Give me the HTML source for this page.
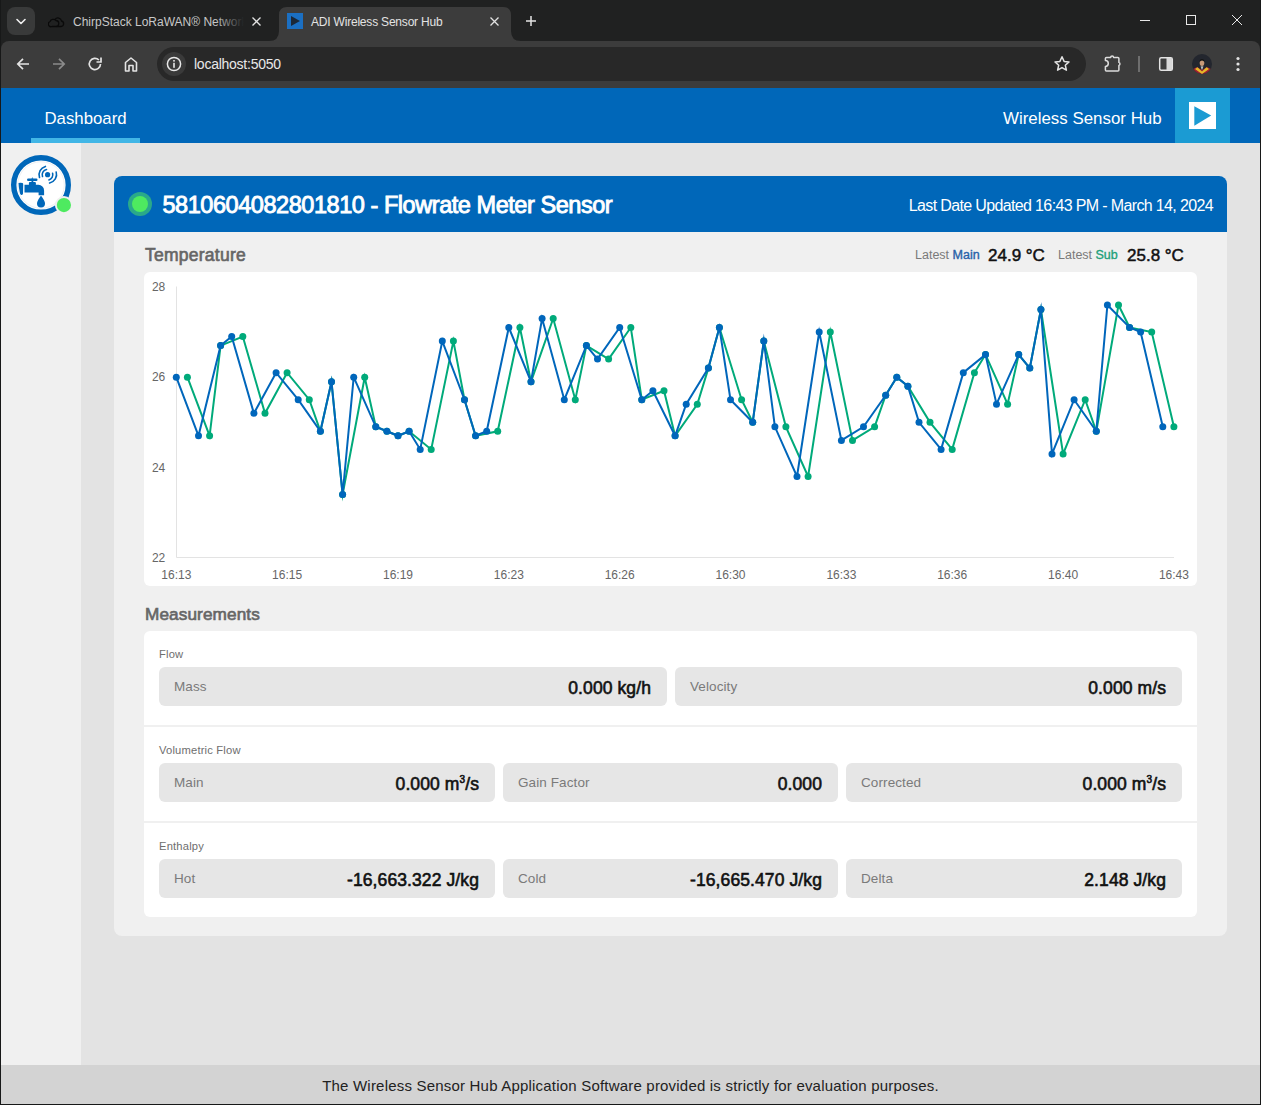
<!DOCTYPE html>
<html><head><meta charset="utf-8"><title>ADI Wireless Sensor Hub</title>
<style>
*{box-sizing:border-box;margin:0;padding:0}
html,body{width:1261px;height:1105px;overflow:hidden}
body{position:relative;background:#202121;font-family:"Liberation Sans",sans-serif}
.a{position:absolute}
.tabtxt{position:absolute;font-size:12px;color:#e3e3e3;white-space:nowrap;line-height:14px}
.hdr{background:#0067b9}
.lbl{color:#666;-webkit-text-stroke:0.65px #666}
.sec{position:absolute;left:144px;width:1053px;background:#fff}
.grp{position:absolute;left:15px;font-size:11.2px;color:#6e6e6e;line-height:13px;letter-spacing:0.18px}
.box{position:absolute;height:39px;background:#e6e6e6;border-radius:6px}
.box .k{position:absolute;left:15px;top:13px;font-size:13.5px;color:#7a7a7a;line-height:14px;letter-spacing:0.1px}
.box .v{position:absolute;right:16px;top:12.5px;font-size:17.5px;color:#111;-webkit-text-stroke:0.6px #111;line-height:17.5px;letter-spacing:0.1px;white-space:nowrap}
.box .v sup{font-size:10px;position:relative;top:-1px;vertical-align:top;line-height:10px}
</style></head><body>
<!-- window borders -->
<div class="a" style="left:0;top:0;width:1px;height:1105px;background:#171818"></div>
<div class="a" style="left:1260px;top:0;width:1px;height:1105px;background:#171818"></div>
<div class="a" style="left:0;top:1104px;width:1261px;height:1px;background:#171818"></div>
<!-- tab strip -->
<div class="a" style="left:7px;top:7px;width:28px;height:28px;border-radius:8px;background:#393a3a"></div>
<svg class="a" style="left:7px;top:7px" width="28" height="28"><path d="M10 12.5 L14 16.5 L18 12.5" fill="none" stroke="#f0f0f0" stroke-width="1.6" stroke-linecap="round" stroke-linejoin="round"/></svg>
<svg class="a" style="left:48px;top:15px" width="18" height="13"><path d="M4 11.5 H7.5 A3 3 0 0 0 8 5.5 A3.6 3.6 0 0 0 2 6.5 A2.6 2.6 0 0 0 4 11.5 Z" fill="none" stroke="#0a0a0a" stroke-width="1.3"/><path d="M8.5 11.5 H13 A2.8 2.8 0 0 0 13.5 6 A3.6 3.6 0 0 0 7 4.5" fill="none" stroke="#0a0a0a" stroke-width="1.3"/></svg>
<div class="tabtxt" style="left:73px;top:15px;width:172px;overflow:hidden;color:#c8c8c8">ChirpStack LoRaWAN® Network Server</div>
<div class="a" style="left:215px;top:10px;width:32px;height:22px;background:linear-gradient(90deg,rgba(32,33,33,0),#202121 90%)"></div>
<svg class="a" style="left:250px;top:15px" width="13" height="13"><path d="M2.5 2.5 L10.5 10.5 M10.5 2.5 L2.5 10.5" stroke="#e3e3e3" stroke-width="1.3"/></svg>
<!-- active tab -->
<svg class="a" style="left:269px;top:7px" width="252" height="34"><path d="M0 34 Q10 34 10 24 V8 Q10 0 18 0 H234 Q242 0 242 8 V24 Q242 34 252 34 Z" fill="#3c3c3c"/></svg>
<svg class="a" style="left:287px;top:13px" width="16" height="16"><rect width="16" height="16" fill="#1b6fc2"/><path d="M4 3 L13 8 L4 13 Z" fill="#1b2838"/></svg>
<div class="tabtxt" style="left:311px;top:15px;letter-spacing:-0.2px">ADI Wireless Sensor Hub</div>
<svg class="a" style="left:488px;top:15px" width="13" height="13"><path d="M2.5 2.5 L10.5 10.5 M10.5 2.5 L2.5 10.5" stroke="#e3e3e3" stroke-width="1.3"/></svg>
<svg class="a" style="left:524px;top:14px" width="14" height="14"><path d="M7 2 V12 M2 7 H12" stroke="#e3e3e3" stroke-width="1.5"/></svg>
<!-- window controls -->
<div class="a" style="left:1140px;top:20px;width:10px;height:1px;background:#e8e8e8"></div>
<div class="a" style="left:1186px;top:15px;width:10px;height:10px;border:1px solid #e8e8e8"></div>
<svg class="a" style="left:1231px;top:14px" width="12" height="12"><path d="M1 1 L11 11 M11 1 L1 11" stroke="#e8e8e8" stroke-width="1"/></svg>
<!-- toolbar -->
<div class="a" style="left:1px;top:41px;width:1259px;height:47px;background:#3c3c3c;border-radius:8px 8px 0 0"></div>
<svg class="a" style="left:14px;top:55px" width="18" height="18"><path d="M15 9 H4 M9 3.8 L3.8 9 L9 14.2" fill="none" stroke="#e3e3e3" stroke-width="1.7"/></svg>
<svg class="a" style="left:50px;top:55px" width="18" height="18"><path d="M3 9 H14 M9 3.8 L14.2 9 L9 14.2" fill="none" stroke="#8b8b8b" stroke-width="1.7"/></svg>
<svg class="a" style="left:86px;top:55px" width="18" height="18"><path d="M14.5 9 A5.6 5.6 0 1 1 12.9 5" fill="none" stroke="#e3e3e3" stroke-width="1.7"/><path d="M15 2.5 V7 H10.5" fill="none" stroke="#e3e3e3" stroke-width="1.7"/></svg>
<svg class="a" style="left:122px;top:55px" width="18" height="18"><path d="M3.5 16 V7.5 L9 3 L14.5 7.5 V16 H11 V10.5 H7 V16 Z" fill="none" stroke="#e3e3e3" stroke-width="1.6" stroke-linejoin="round"/></svg>
<div class="a" style="left:157px;top:47px;width:929px;height:34px;border-radius:17px;background:#282828"></div>
<div class="a" style="left:162px;top:52px;width:24px;height:24px;border-radius:12px;background:#3a3a3a"></div>
<svg class="a" style="left:166px;top:56px" width="16" height="16"><circle cx="8" cy="8" r="6.6" fill="none" stroke="#e8e8e8" stroke-width="1.5"/><rect x="7.2" y="6.8" width="1.6" height="5" fill="#e8e8e8"/><rect x="7.2" y="4" width="1.6" height="1.6" fill="#e8e8e8"/></svg>
<div class="a" style="left:194px;top:56px;font-size:14px;line-height:16px;color:#e8e8e8;letter-spacing:-0.25px">localhost:5050</div>
<svg class="a" style="left:1053px;top:55px" width="18" height="18"><path d="M9 1.8 L11.1 6.4 L16 6.9 L12.3 10.2 L13.4 15.2 L9 12.6 L4.6 15.2 L5.7 10.2 L2 6.9 L6.9 6.4 Z" fill="none" stroke="#e3e3e3" stroke-width="1.5" stroke-linejoin="round"/></svg>
<svg class="a" style="left:1103px;top:54px" width="20" height="19"><path d="M3.4 3.4 H7.7 A1.45 1.45 0 0 1 10.6 3.4 H14.9 A1 1 0 0 1 15.9 4.4 V8.4 A1.6 1.6 0 0 1 15.9 11.4 V15.9 A1 1 0 0 1 14.9 16.9 H3.4 A1 1 0 0 1 2.4 15.9 V12.4 A2.9 2.9 0 0 0 2.4 6.6 V4.4 A1 1 0 0 1 3.4 3.4 Z" fill="none" stroke="#dcdcdc" stroke-width="1.5" stroke-linejoin="round"/></svg>
<div class="a" style="left:1138px;top:56px;width:1.5px;height:16px;background:#6e6e6e"></div>
<svg class="a" style="left:1157px;top:55px" width="18" height="18"><rect x="2.7" y="2.7" width="12.6" height="12.6" rx="1.5" fill="none" stroke="#e3e3e3" stroke-width="1.5"/><rect x="9.5" y="3" width="5.5" height="12" fill="#d8d8d8"/></svg>
<svg class="a" style="left:1192px;top:54px" width="20" height="20"><defs><clipPath id="avc"><circle cx="10" cy="10" r="10"/></clipPath></defs><g clip-path="url(#avc)"><rect width="20" height="20" fill="#23262e"/><path d="M0 20 V15.5 L5 13 L10 16 L15 13 L20 15.5 V20 Z" fill="#9e2230"/><path d="M3 15 L5.5 13.2 L10 17.5 L14.5 13.2 L17 15 L10 20 Z" fill="#e6b928"/><path d="M8.6 12.5 L10 16 L11.4 12.5 Z" fill="#f2f2f2"/><path d="M9.7 13 L10 15.5 L10.3 13 Z" fill="#222"/><ellipse cx="10" cy="9" rx="2.3" ry="3" fill="#c99a78"/><path d="M7.5 8 Q7.6 5 10 5 Q12.4 5 12.5 8 Q11.5 6.3 10 6.4 Q8.5 6.3 7.5 8 Z" fill="#151515"/></g></svg>
<svg class="a" style="left:1231px;top:55px" width="14" height="18"><circle cx="7" cy="3.5" r="1.6" fill="#e3e3e3"/><circle cx="7" cy="9" r="1.6" fill="#e3e3e3"/><circle cx="7" cy="14.5" r="1.6" fill="#e3e3e3"/></svg>
<!-- page header -->
<div class="a hdr" style="left:1px;top:88px;width:1259px;height:55px"></div>
<div class="a" style="left:44.5px;top:111px;font-size:16.8px;line-height:16.8px;color:#fff;white-space:nowrap">Dashboard</div>
<div class="a" style="left:31px;top:138px;width:109px;height:5px;background:#41b6e6"></div>
<div class="a" style="left:1003px;top:111px;font-size:16.9px;line-height:16.9px;color:#fff;white-space:nowrap">Wireless Sensor Hub</div>
<div class="a" style="left:1175px;top:88px;width:55px;height:55px;background:#1b9bd3"></div>
<svg class="a" style="left:1189px;top:102px" width="27" height="27"><rect width="27" height="27" fill="#fff"/><path d="M5.3 4.3 L22.2 13.4 L5.3 23.7 Z" fill="#1b9bd3"/></svg>
<!-- sidebar + content bg -->
<div class="a" style="left:1px;top:143px;width:80px;height:922px;background:#f0f0f0"></div>
<div class="a" style="left:81px;top:143px;width:1179px;height:922px;background:#e3e3e3"></div>
<!-- sidebar logo -->
<svg class="a" style="left:8px;top:150px" width="70" height="70" viewBox="0 0 70 70">
  <circle cx="33" cy="35" r="27.3" fill="#fff" stroke="#0067b9" stroke-width="5.4"/>
  <circle cx="33" cy="35" r="23.3" fill="none" stroke="#eef0f2" stroke-width="1"/>
  <!-- faucet -->
  <path d="M10.5 33 Q12 32.3 14.6 33 Q15.4 33.5 15.2 35 L15 43.5 Q14.6 45.2 13.2 45 Q12 44.6 11.7 42 Q10.6 37 10.5 33 Z" fill="#0067b9"/>
  <path d="M16.5 34.8 H30.4 A5.7 5.7 0 0 1 36.1 40.5 V45.3 H30.6 V42.4 H16.5 Z" fill="#0067b9"/>
  <rect x="20.9" y="32" width="7" height="3.5" rx="1" fill="#0067b9"/>
  <rect x="23.5" y="29" width="1.8" height="3.5" fill="#0067b9"/>
  <rect x="19" y="28.6" width="10.5" height="2.4" rx="1.2" fill="#0067b9"/>
  <path d="M24.4 27.2 L25.4 28.8 H23.4 Z" fill="#0067b9"/>
  <path d="M33 45.5 Q37 51 37 53.5 A4 4 0 0 1 29 53.5 Q29 51 33 45.5 Z" fill="#0067b9"/>
  <!-- signal -->
  <circle cx="39.6" cy="24.7" r="2.6" fill="#0067b9"/>
  <path d="M37.4 16.4 A8.7 8.7 0 0 0 31.5 27.5" fill="none" stroke="#0067b9" stroke-width="1.6" stroke-linecap="round"/>
  <path d="M38.5 19.5 A5.3 5.3 0 0 0 34.5 26.5" fill="none" stroke="#0067b9" stroke-width="1.6" stroke-linecap="round"/>
  <path d="M44.6 23.3 A5.3 5.3 0 0 1 40.9 29.9" fill="none" stroke="#0067b9" stroke-width="1.6" stroke-linecap="round"/>
  <path d="M48.2 22 A8.7 8.7 0 0 1 41.6 33" fill="none" stroke="#0067b9" stroke-width="1.6" stroke-linecap="round"/>
  <!-- status dot -->
  <circle cx="55.9" cy="55.1" r="9" fill="#f0f0f0"/>
  <circle cx="55.9" cy="55.1" r="7.1" fill="#4eea60"/>
</svg>
<!-- card -->
<div class="a" style="left:114px;top:176px;width:1113px;height:760px;background:#f0f0f0;border-radius:8px"></div>
<div class="a hdr" style="left:114px;top:176px;width:1113px;height:56px;border-radius:8px 8px 0 0"></div>
<div class="a" style="left:128px;top:192px;width:24px;height:24px;border-radius:12px;background:#2aa98a"></div>
<div class="a" style="left:132px;top:196px;width:16px;height:16px;border-radius:8px;background:#4eea60"></div>
<div class="a" style="left:162.5px;top:194.3px;font-size:23.5px;line-height:23.5px;color:#fff;-webkit-text-stroke:0.9px #fff;white-space:nowrap;letter-spacing:-0.45px">5810604082801810 - Flowrate Meter Sensor</div>
<div class="a" style="right:48px;top:197.5px;font-size:16px;line-height:16px;color:#fff;white-space:nowrap;letter-spacing:-0.64px">Last Date Updated 16:43 PM - March 14, 2024</div>
<div class="a lbl" style="left:145px;top:247px;font-size:17.5px;line-height:17.5px;letter-spacing:0.25px;white-space:nowrap">Temperature</div>
<div class="a" style="left:915px;top:249px;font-size:12.5px;line-height:12.5px;color:#7a7a7a;white-space:nowrap">Latest <span style="color:#2761a8;-webkit-text-stroke:0.35px #2761a8">Main</span></div>
<div class="a" style="left:988px;top:247px;font-size:17px;line-height:17px;-webkit-text-stroke:0.5px #111;color:#111;white-space:nowrap">24.9 °C</div>
<div class="a" style="left:1058px;top:249px;font-size:12.5px;line-height:12.5px;color:#7a7a7a;white-space:nowrap">Latest <span style="color:#22a07a;-webkit-text-stroke:0.35px #22a07a">Sub</span></div>
<div class="a" style="left:1127px;top:247px;font-size:17px;line-height:17px;-webkit-text-stroke:0.5px #111;color:#111;white-space:nowrap">25.8 °C</div>
<div class="a" style="left:144px;top:272px;width:1053px;height:314px;background:#fff;border-radius:6px"></div>
<svg class="a" style="left:0;top:0" width="1261" height="1105" viewBox="0 0 1261 1105">
<path d="M176.5 286.5 V557.5 H1174" fill="none" stroke="#e3e3e3" stroke-width="1"/>
<text x="165.3" y="291.1" text-anchor="end" font-size="12" fill="#666">28</text>
<text x="165.3" y="381.4" text-anchor="end" font-size="12" fill="#666">26</text>
<text x="165.3" y="471.6" text-anchor="end" font-size="12" fill="#666">24</text>
<text x="165.3" y="561.9" text-anchor="end" font-size="12" fill="#666">22</text>
<text x="176.3" y="579" text-anchor="middle" font-size="12" fill="#666">16:13</text>
<text x="287.1" y="579" text-anchor="middle" font-size="12" fill="#666">16:15</text>
<text x="398.0" y="579" text-anchor="middle" font-size="12" fill="#666">16:19</text>
<text x="508.8" y="579" text-anchor="middle" font-size="12" fill="#666">16:23</text>
<text x="619.7" y="579" text-anchor="middle" font-size="12" fill="#666">16:26</text>
<text x="730.5" y="579" text-anchor="middle" font-size="12" fill="#666">16:30</text>
<text x="841.4" y="579" text-anchor="middle" font-size="12" fill="#666">16:33</text>
<text x="952.2" y="579" text-anchor="middle" font-size="12" fill="#666">16:36</text>
<text x="1063.1" y="579" text-anchor="middle" font-size="12" fill="#666">16:40</text>
<text x="1173.9" y="579" text-anchor="middle" font-size="12" fill="#666">16:43</text>
<polyline points="187.4,377.2 209.6,435.8 220.6,345.6 242.8,336.5 265.0,413.3 287.1,372.7 309.3,399.7 320.4,431.3 331.5,381.7 342.6,494.5 364.7,377.2 375.8,426.8 386.9,431.3 398.0,435.8 409.1,431.3 431.2,449.4 453.4,341.1 464.5,399.7 475.6,435.8 497.7,431.3 519.9,327.5 531.0,381.7 553.2,318.5 575.3,399.7 586.4,345.6 608.6,359.1 630.8,327.5 641.8,399.7 664.0,390.7 675.1,435.8 697.3,404.2 708.4,368.1 719.4,327.5 741.6,399.7 752.7,422.3 763.8,341.1 785.9,426.8 808.1,476.5 830.3,332.0 852.5,440.4 874.6,426.8 885.7,395.2 896.8,377.2 907.9,386.2 930.0,422.3 952.2,449.4 974.4,372.7 985.5,354.6 1007.6,404.2 1018.7,354.6 1029.8,368.1 1040.9,309.5 1063.1,453.9 1085.2,399.7 1096.3,431.3 1118.5,305.0 1129.6,327.5 1151.7,332.0 1173.9,426.8" fill="none" stroke="#00aa7a" stroke-width="2" stroke-linejoin="miter" stroke-miterlimit="10"/>
<circle cx="187.4" cy="377.2" r="3.5" fill="#00aa7a"/>
<circle cx="209.6" cy="435.8" r="3.5" fill="#00aa7a"/>
<circle cx="220.6" cy="345.6" r="3.5" fill="#00aa7a"/>
<circle cx="242.8" cy="336.5" r="3.5" fill="#00aa7a"/>
<circle cx="265.0" cy="413.3" r="3.5" fill="#00aa7a"/>
<circle cx="287.1" cy="372.7" r="3.5" fill="#00aa7a"/>
<circle cx="309.3" cy="399.7" r="3.5" fill="#00aa7a"/>
<circle cx="320.4" cy="431.3" r="3.5" fill="#00aa7a"/>
<circle cx="331.5" cy="381.7" r="3.5" fill="#00aa7a"/>
<circle cx="342.6" cy="494.5" r="3.5" fill="#00aa7a"/>
<circle cx="364.7" cy="377.2" r="3.5" fill="#00aa7a"/>
<circle cx="375.8" cy="426.8" r="3.5" fill="#00aa7a"/>
<circle cx="386.9" cy="431.3" r="3.5" fill="#00aa7a"/>
<circle cx="398.0" cy="435.8" r="3.5" fill="#00aa7a"/>
<circle cx="409.1" cy="431.3" r="3.5" fill="#00aa7a"/>
<circle cx="431.2" cy="449.4" r="3.5" fill="#00aa7a"/>
<circle cx="453.4" cy="341.1" r="3.5" fill="#00aa7a"/>
<circle cx="464.5" cy="399.7" r="3.5" fill="#00aa7a"/>
<circle cx="475.6" cy="435.8" r="3.5" fill="#00aa7a"/>
<circle cx="497.7" cy="431.3" r="3.5" fill="#00aa7a"/>
<circle cx="519.9" cy="327.5" r="3.5" fill="#00aa7a"/>
<circle cx="531.0" cy="381.7" r="3.5" fill="#00aa7a"/>
<circle cx="553.2" cy="318.5" r="3.5" fill="#00aa7a"/>
<circle cx="575.3" cy="399.7" r="3.5" fill="#00aa7a"/>
<circle cx="586.4" cy="345.6" r="3.5" fill="#00aa7a"/>
<circle cx="608.6" cy="359.1" r="3.5" fill="#00aa7a"/>
<circle cx="630.8" cy="327.5" r="3.5" fill="#00aa7a"/>
<circle cx="641.8" cy="399.7" r="3.5" fill="#00aa7a"/>
<circle cx="664.0" cy="390.7" r="3.5" fill="#00aa7a"/>
<circle cx="675.1" cy="435.8" r="3.5" fill="#00aa7a"/>
<circle cx="697.3" cy="404.2" r="3.5" fill="#00aa7a"/>
<circle cx="708.4" cy="368.1" r="3.5" fill="#00aa7a"/>
<circle cx="719.4" cy="327.5" r="3.5" fill="#00aa7a"/>
<circle cx="741.6" cy="399.7" r="3.5" fill="#00aa7a"/>
<circle cx="752.7" cy="422.3" r="3.5" fill="#00aa7a"/>
<circle cx="763.8" cy="341.1" r="3.5" fill="#00aa7a"/>
<circle cx="785.9" cy="426.8" r="3.5" fill="#00aa7a"/>
<circle cx="808.1" cy="476.5" r="3.5" fill="#00aa7a"/>
<circle cx="830.3" cy="332.0" r="3.5" fill="#00aa7a"/>
<circle cx="852.5" cy="440.4" r="3.5" fill="#00aa7a"/>
<circle cx="874.6" cy="426.8" r="3.5" fill="#00aa7a"/>
<circle cx="885.7" cy="395.2" r="3.5" fill="#00aa7a"/>
<circle cx="896.8" cy="377.2" r="3.5" fill="#00aa7a"/>
<circle cx="907.9" cy="386.2" r="3.5" fill="#00aa7a"/>
<circle cx="930.0" cy="422.3" r="3.5" fill="#00aa7a"/>
<circle cx="952.2" cy="449.4" r="3.5" fill="#00aa7a"/>
<circle cx="974.4" cy="372.7" r="3.5" fill="#00aa7a"/>
<circle cx="985.5" cy="354.6" r="3.5" fill="#00aa7a"/>
<circle cx="1007.6" cy="404.2" r="3.5" fill="#00aa7a"/>
<circle cx="1018.7" cy="354.6" r="3.5" fill="#00aa7a"/>
<circle cx="1029.8" cy="368.1" r="3.5" fill="#00aa7a"/>
<circle cx="1040.9" cy="309.5" r="3.5" fill="#00aa7a"/>
<circle cx="1063.1" cy="453.9" r="3.5" fill="#00aa7a"/>
<circle cx="1085.2" cy="399.7" r="3.5" fill="#00aa7a"/>
<circle cx="1096.3" cy="431.3" r="3.5" fill="#00aa7a"/>
<circle cx="1118.5" cy="305.0" r="3.5" fill="#00aa7a"/>
<circle cx="1129.6" cy="327.5" r="3.5" fill="#00aa7a"/>
<circle cx="1151.7" cy="332.0" r="3.5" fill="#00aa7a"/>
<circle cx="1173.9" cy="426.8" r="3.5" fill="#00aa7a"/>
<polyline points="176.3,377.2 198.5,435.8 220.6,345.6 231.7,336.5 253.9,413.3 276.1,372.7 298.2,399.7 320.4,431.3 331.5,381.7 342.6,494.5 353.7,377.2 375.8,426.8 386.9,431.3 398.0,435.8 409.1,431.3 420.2,449.4 442.3,341.1 464.5,399.7 475.6,435.8 486.7,431.3 508.8,327.5 531.0,381.7 542.1,318.5 564.3,399.7 586.4,345.6 597.5,359.1 619.7,327.5 641.8,399.7 652.9,390.7 675.1,435.8 686.2,404.2 708.4,368.1 719.4,327.5 730.5,399.7 752.7,422.3 763.8,341.1 774.9,426.8 797.0,476.5 819.2,332.0 841.4,440.4 863.5,426.8 885.7,395.2 896.8,377.2 907.9,386.2 919.0,422.3 941.1,449.4 963.3,372.7 985.5,354.6 996.5,404.2 1018.7,354.6 1029.8,368.1 1040.9,309.5 1052.0,453.9 1074.1,399.7 1096.3,431.3 1107.4,305.0 1129.6,327.5 1140.6,332.0 1162.8,426.8" fill="none" stroke="#0066bb" stroke-width="2" stroke-linejoin="miter" stroke-miterlimit="10"/>
<circle cx="176.3" cy="377.2" r="3.5" fill="#0066bb"/>
<circle cx="198.5" cy="435.8" r="3.5" fill="#0066bb"/>
<circle cx="220.6" cy="345.6" r="3.5" fill="#0066bb"/>
<circle cx="231.7" cy="336.5" r="3.5" fill="#0066bb"/>
<circle cx="253.9" cy="413.3" r="3.5" fill="#0066bb"/>
<circle cx="276.1" cy="372.7" r="3.5" fill="#0066bb"/>
<circle cx="298.2" cy="399.7" r="3.5" fill="#0066bb"/>
<circle cx="320.4" cy="431.3" r="3.5" fill="#0066bb"/>
<circle cx="331.5" cy="381.7" r="3.5" fill="#0066bb"/>
<circle cx="342.6" cy="494.5" r="3.5" fill="#0066bb"/>
<circle cx="353.7" cy="377.2" r="3.5" fill="#0066bb"/>
<circle cx="375.8" cy="426.8" r="3.5" fill="#0066bb"/>
<circle cx="386.9" cy="431.3" r="3.5" fill="#0066bb"/>
<circle cx="398.0" cy="435.8" r="3.5" fill="#0066bb"/>
<circle cx="409.1" cy="431.3" r="3.5" fill="#0066bb"/>
<circle cx="420.2" cy="449.4" r="3.5" fill="#0066bb"/>
<circle cx="442.3" cy="341.1" r="3.5" fill="#0066bb"/>
<circle cx="464.5" cy="399.7" r="3.5" fill="#0066bb"/>
<circle cx="475.6" cy="435.8" r="3.5" fill="#0066bb"/>
<circle cx="486.7" cy="431.3" r="3.5" fill="#0066bb"/>
<circle cx="508.8" cy="327.5" r="3.5" fill="#0066bb"/>
<circle cx="531.0" cy="381.7" r="3.5" fill="#0066bb"/>
<circle cx="542.1" cy="318.5" r="3.5" fill="#0066bb"/>
<circle cx="564.3" cy="399.7" r="3.5" fill="#0066bb"/>
<circle cx="586.4" cy="345.6" r="3.5" fill="#0066bb"/>
<circle cx="597.5" cy="359.1" r="3.5" fill="#0066bb"/>
<circle cx="619.7" cy="327.5" r="3.5" fill="#0066bb"/>
<circle cx="641.8" cy="399.7" r="3.5" fill="#0066bb"/>
<circle cx="652.9" cy="390.7" r="3.5" fill="#0066bb"/>
<circle cx="675.1" cy="435.8" r="3.5" fill="#0066bb"/>
<circle cx="686.2" cy="404.2" r="3.5" fill="#0066bb"/>
<circle cx="708.4" cy="368.1" r="3.5" fill="#0066bb"/>
<circle cx="719.4" cy="327.5" r="3.5" fill="#0066bb"/>
<circle cx="730.5" cy="399.7" r="3.5" fill="#0066bb"/>
<circle cx="752.7" cy="422.3" r="3.5" fill="#0066bb"/>
<circle cx="763.8" cy="341.1" r="3.5" fill="#0066bb"/>
<circle cx="774.9" cy="426.8" r="3.5" fill="#0066bb"/>
<circle cx="797.0" cy="476.5" r="3.5" fill="#0066bb"/>
<circle cx="819.2" cy="332.0" r="3.5" fill="#0066bb"/>
<circle cx="841.4" cy="440.4" r="3.5" fill="#0066bb"/>
<circle cx="863.5" cy="426.8" r="3.5" fill="#0066bb"/>
<circle cx="885.7" cy="395.2" r="3.5" fill="#0066bb"/>
<circle cx="896.8" cy="377.2" r="3.5" fill="#0066bb"/>
<circle cx="907.9" cy="386.2" r="3.5" fill="#0066bb"/>
<circle cx="919.0" cy="422.3" r="3.5" fill="#0066bb"/>
<circle cx="941.1" cy="449.4" r="3.5" fill="#0066bb"/>
<circle cx="963.3" cy="372.7" r="3.5" fill="#0066bb"/>
<circle cx="985.5" cy="354.6" r="3.5" fill="#0066bb"/>
<circle cx="996.5" cy="404.2" r="3.5" fill="#0066bb"/>
<circle cx="1018.7" cy="354.6" r="3.5" fill="#0066bb"/>
<circle cx="1029.8" cy="368.1" r="3.5" fill="#0066bb"/>
<circle cx="1040.9" cy="309.5" r="3.5" fill="#0066bb"/>
<circle cx="1052.0" cy="453.9" r="3.5" fill="#0066bb"/>
<circle cx="1074.1" cy="399.7" r="3.5" fill="#0066bb"/>
<circle cx="1096.3" cy="431.3" r="3.5" fill="#0066bb"/>
<circle cx="1107.4" cy="305.0" r="3.5" fill="#0066bb"/>
<circle cx="1129.6" cy="327.5" r="3.5" fill="#0066bb"/>
<circle cx="1140.6" cy="332.0" r="3.5" fill="#0066bb"/>
<circle cx="1162.8" cy="426.8" r="3.5" fill="#0066bb"/>
</svg>
<!-- measurements -->
<div class="a lbl" style="left:145px;top:606px;font-size:17.2px;line-height:17.2px;letter-spacing:0.1px;white-space:nowrap">Measurements</div>
<div class="a" style="left:144px;top:631px;width:1053px;height:286px;background:#fff;border-radius:6px"></div>
<div class="a" style="left:144px;top:725px;width:1053px;height:2px;background:#f0f0f0"></div>
<div class="a" style="left:144px;top:821px;width:1053px;height:2px;background:#f0f0f0"></div>

<div class="grp a" style="left:159px;top:648px">Flow</div>
<div class="box" style="left:159px;top:667px;width:508px"><span class="k">Mass</span><span class="v">0.000 kg/h</span></div>
<div class="box" style="left:675px;top:667px;width:507px"><span class="k">Velocity</span><span class="v">0.000 m/s</span></div>

<div class="grp a" style="left:159px;top:744px">Volumetric Flow</div>
<div class="box" style="left:159px;top:763px;width:336px"><span class="k">Main</span><span class="v">0.000 m<sup>3</sup>/s</span></div>
<div class="box" style="left:503px;top:763px;width:335px"><span class="k">Gain Factor</span><span class="v">0.000</span></div>
<div class="box" style="left:846px;top:763px;width:336px"><span class="k">Corrected</span><span class="v">0.000 m<sup>3</sup>/s</span></div>

<div class="grp a" style="left:159px;top:840px">Enthalpy</div>
<div class="box" style="left:159px;top:859px;width:336px"><span class="k">Hot</span><span class="v">-16,663.322 J/kg</span></div>
<div class="box" style="left:503px;top:859px;width:335px"><span class="k">Cold</span><span class="v">-16,665.470 J/kg</span></div>
<div class="box" style="left:846px;top:859px;width:336px"><span class="k">Delta</span><span class="v">2.148 J/kg</span></div>

<!-- footer -->
<div class="a" style="left:1px;top:1065px;width:1259px;height:39px;background:#d3d3d3"></div>
<div class="a" style="left:1px;top:1078px;width:1259px;text-align:center;font-size:15px;line-height:15px;color:#222;white-space:nowrap;letter-spacing:0.2px">The Wireless Sensor Hub Application Software provided is strictly for evaluation purposes.</div>
</body></html>
